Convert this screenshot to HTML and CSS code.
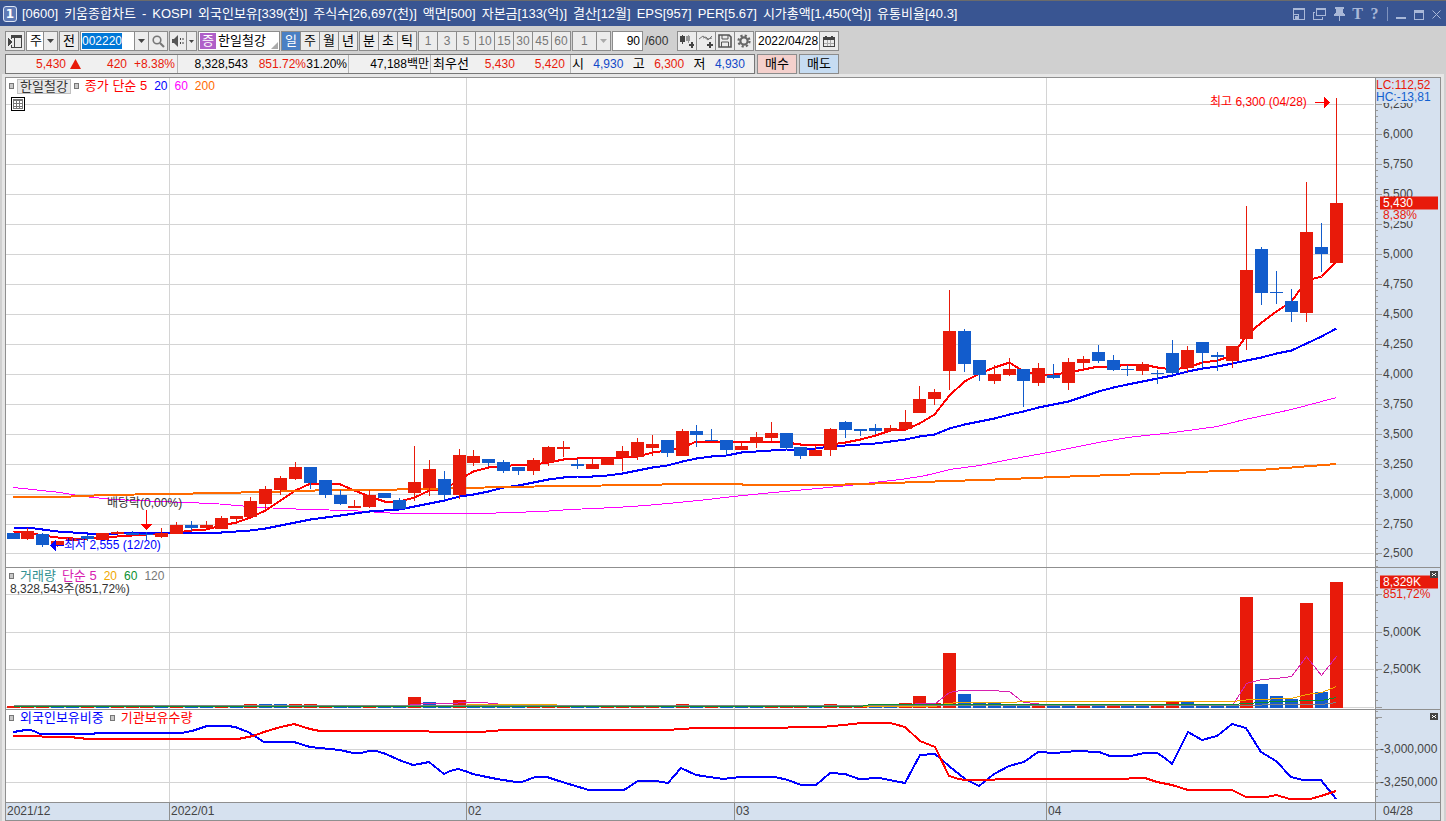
FILE: index.html
```html
<!DOCTYPE html>
<html lang="ko">
<head>
<meta charset="utf-8">
<title>[0600] 키움종합차트</title>
<link rel="stylesheet" href="styles.css">
</head>
<body>
<div class="window">
  <header class="titlebar">
    <span class="badge">1</span>
    <h1 class="title">
      <span>[0600]</span><span>키움종합차트</span><span>-</span><span>KOSPI</span><span>외국인보유[339(천)]</span><span>주식수[26,697(천)]</span><span>액면[500]</span><span>자본금[133(억)]</span><span>결산[12월]</span><span>EPS[957]</span><span>PER[5.67]</span><span>시가총액[1,450(억)]</span><span>유통비율[40.3]</span>
    </h1>
    <div class="winbtns">
      <button type="button" aria-label="축소"><svg width="12" height="12" viewBox="0 0 12 12" shape-rendering="crispEdges"><path d="M0 0h12v12H0zM1 2v4h5v5h5V2z" fill-rule="evenodd"/><path d="M1 7h4v4H1z" fill="#395592"/><path d="M2 8h3v3H2z"/></svg></button>
      <button type="button" aria-label="복제"><svg width="13" height="12" viewBox="0 0 13 12" shape-rendering="crispEdges"><path d="M3 0h10v8H3zM4 2v5h8V2zM0 4h2v1H1v6h8V9h1v3H0z" fill-rule="evenodd"/></svg></button>
      <button type="button" aria-label="고정"><svg width="11" height="14" viewBox="0 0 11 14" shape-rendering="crispEdges"><path d="M1 0h9v2H9v4h1v1h1v2H0V7h1V6h1V2H1zM5 9h1v5H5z"/></svg></button>
      <button type="button" aria-label="글꼴" class="serif">T</button>
      <button type="button" aria-label="도움말" class="serif">?</button>
      <i class="vbar"></i>
      <button type="button" aria-label="최소화"><svg width="10" height="12" viewBox="0 0 10 12" shape-rendering="crispEdges"><path d="M0 9h10v2H0z"/></svg></button>
      <button type="button" aria-label="최대화"><svg width="10" height="12" viewBox="0 0 10 12" shape-rendering="crispEdges"><path d="M0 2h10v10H0zM1 5v6h8V5z" fill-rule="evenodd"/></svg></button>
      <button type="button" aria-label="닫기"><svg width="9" height="12" viewBox="0 0 9 12"><path d="M.5 2.500l8 8M8.500 2.500l-8 8" fill="none" stroke="#a9b8d8"/></svg></button>
    </div>
  </header>

  <div class="tools">
    <div class="toolbar">
      <button type="button" class="box sq" aria-label="메뉴"><svg width="14" height="13" viewBox="0 0 14 13" shape-rendering="crispEdges"><path d="M3 0h11v13H3v-3h1v2h9V3H4v1H3z"/><path d="M6 1h1v11H6z"/><path d="M0 3l5 4-5 4z"/></svg></button>
      <label class="box drop w32"><select class="ko" aria-label="구분"><option>주</option></select><span class="arr"><svg width="7" height="4"><path d="M0 0h7L3.500 4z"/></svg></span></label>
      <button type="button" class="box sq ko">전</button>
      <div class="box code">
        <input id="code" type="text" value="002220" aria-label="종목코드">
        <button type="button" class="seg14" aria-label="목록"><svg width="7" height="4"><path d="M0 0h7L3.500 4z"/></svg></button>
        <button type="button" class="seg19" aria-label="검색"><svg width="13" height="13" viewBox="0 0 13 13"><circle cx="5" cy="5" r="3.800" fill="none" stroke="#777" stroke-width="1.600"/><path d="M8 8l4 4" stroke="#777" stroke-width="2.200"/></svg></button>
      </div>
      <div class="box pair">
        <button type="button" class="seg16" aria-label="소리"><svg width="13" height="12" viewBox="0 0 13 12"><path d="M0 4h2l4-4v12L2 8H0z" fill="#555"/><path d="M8 3h1v2H8zM8 7h1v2H8zM10.500 3h1v2h-1zM10.500 7h1v2h-1z"/></svg></button>
        <button type="button" class="seg10" aria-label="소리 설정"><svg width="5" height="3"><path d="M0 0h5L2.500 3z"/></svg></button>
      </div>
      <div class="box name ko"><span class="tag">증</span><span>한일철강</span><svg class="corner" width="7" height="7"><path d="M7 0v7H0z"/></svg></div>
      <div class="box group ko">
        <button type="button" class="on">일</button><button type="button">주</button><button type="button">월</button><button type="button">년</button>
      </div>
      <div class="box group ko">
        <button type="button">분</button><button type="button">초</button><button type="button">틱</button>
      </div>
      <div class="box group dim">
        <button type="button">1</button><button type="button">3</button><button type="button">5</button><button type="button">10</button><button type="button">15</button><button type="button">30</button><button type="button">45</button><button type="button">60</button>
      </div>
      <label class="box drop w39 dim"><select aria-label="간격"><option>1</option></select><span class="arr"><svg width="7" height="4"><path d="M0 0h7L3.500 4z"/></svg></span></label>
      <input class="box count" type="text" value="90" aria-label="봉 개수">
      <span class="total">/600</span>
      <div class="box group icons">
        <button type="button" aria-label="캔들 추가"><svg width="16" height="15" viewBox="0 0 16 15" shape-rendering="crispEdges"><path d="M1 2h5v6H1zM3 1h1v9H3z"/><path d="M7 2h4v5H7zM9 1h1v8H9z" fill="#999"/><path d="M10 10h5v2h-5zM12 8h2v6h-2z"/></svg></button>
        <button type="button" aria-label="지표 추가"><svg width="16" height="15" viewBox="0 0 16 15"><path d="M1 5l4-3 5 4 4-4M5 4l3-1 2 2 4-1" fill="none" stroke="#777"/><path d="M9 10h6v2H9zM11 8h2v6h-2z"/></svg></button>
        <button type="button" aria-label="저장"><svg width="14" height="14" viewBox="0 0 14 14"><path d="M1 1h10l2 2v10H1z" fill="none" stroke="#555" stroke-width="1.600"/><path d="M4 1v4h6V1M3.500 13V8h7v5" fill="none" stroke="#555"/></svg></button>
        <button type="button" aria-label="설정"><svg width="14" height="14" viewBox="0 0 14 14"><circle cx="7" cy="7" r="3.600" fill="none" stroke="#666" stroke-width="2.200"/><circle cx="7" cy="7" r="5.500" fill="none" stroke="#666" stroke-width="2.200" stroke-dasharray="2.200 2.120"/></svg></button>
      </div>
      <div class="box date">
        <input type="text" value="2022/04/28" aria-label="날짜">
        <button type="button" class="seg19" aria-label="달력"><svg width="12" height="11" viewBox="0 0 12 11" shape-rendering="crispEdges"><path d="M0 1h12v10H0zM1 4v6h10V4z" fill-rule="evenodd"/><path d="M2 0h2v1H2zM8 0h2v1H8z"/><path d="M4 4h1v6H4zM7 4h1v6H7zM1 7h10v1H1z" fill="#aaa"/></svg></button>
      </div>
    </div>

    <div class="quotes">
      <div class="box quote">
        <div class="cell c1"><b class="up w60">5,430</b><svg class="tri" width="11" height="10"><path d="M5.500 0L11 10H0z"/></svg><b class="up w46">420</b><b class="up w48">+8.38%</b></div>
        <div class="cell c2"><b class="w70">8,328,543</b><b class="up w58">851.72%</b><b class="w41">31.20%</b></div>
        <div class="cell c3"><b>47,188백만</b></div>
        <div class="cell c4"><span class="ko">최우선</span><b class="up w46">5,430</b><b class="up w50">5,420</b></div>
        <div class="cell c5"><span class="ko">시</span><b class="down">4,930</b><span class="ko">고</span><b class="up">6,300</b><span class="ko">저</span><b class="down">4,930</b></div>
      </div>
      <button type="button" class="box trade buy ko">매수</button>
      <button type="button" class="box trade sell ko">매도</button>
    </div>
  </div>

  <main class="chart">
    <section class="pane" id="price">
      <div class="plot">
        <svg class="draw" viewBox="6 78 1369 489" preserveAspectRatio="none"></svg>
        <div class="legend ko">
          <i class="mark"></i><span class="chip">한일철강</span><i class="mark"></i>
          <span class="l-red">종가 단순 5</span><span class="num l-blue">20</span><span class="num l-mag">60</span><span class="num l-org">200</span>
        </div>
        <button type="button" class="gridbtn" aria-label="표"><svg width="10" height="10" viewBox="0 0 10 10" shape-rendering="crispEdges"><path d="M0 0h10v10H0zM1 2v2h2V2zM4 2v2h2V2zM7 2v2h2V2zM1 5v2h2V5zM4 5v2h2V5zM7 5v2h2V5zM1 8v1h2V8zM4 8v1h2V8zM7 8v1h2V8z" fill-rule="evenodd" fill="#777"/></svg></button>
      </div>
      <div class="axis"><svg class="ticks" viewBox="1376 78 64 489" preserveAspectRatio="none"></svg></div>
    </section>
    <section class="pane" id="volume">
      <div class="plot">
        <svg class="draw" viewBox="6 568 1369 141" preserveAspectRatio="none"></svg>
        <div class="legend ko">
          <i class="mark"></i><span class="l-teal">거래량</span><span class="l-pink">단순 5</span><span class="num l-yel">20</span><span class="num l-grn">60</span><span class="num l-gray">120</span>
        </div>
        <p class="note">8,328,543주(851,72%)</p>
      </div>
      <div class="axis"><svg class="ticks" viewBox="1376 568 64 141" preserveAspectRatio="none"></svg><button type="button" class="close" aria-label="닫기"><svg width="6" height="5" viewBox="0 0 6 5" shape-rendering="crispEdges"><path d="M1 1h1v1H1zM4 1h1v1H4zM2 2h2v1H2zM1 3h1v1H1zM4 3h1v1H4z"/></svg></button></div>
    </section>
    <section class="pane" id="holding">
      <div class="plot">
        <svg class="draw" viewBox="6 710 1369 92" preserveAspectRatio="none"></svg>
        <div class="legend ko">
          <i class="mark"></i><span class="l-blue">외국인보유비중</span><i class="mark"></i><span class="l-red">기관보유수량</span>
        </div>
      </div>
      <div class="axis"><svg class="ticks" viewBox="1376 710 64 92" preserveAspectRatio="none"></svg><button type="button" class="close" aria-label="닫기"><svg width="6" height="5" viewBox="0 0 6 5" shape-rendering="crispEdges"><path d="M1 1h1v1H1zM4 1h1v1H4zM2 2h2v1H2zM1 3h1v1H1zM4 3h1v1H4z"/></svg></button></div>
    </section>
    <footer class="dates">
      <div class="months"><span>2021/12</span><span>2022/01</span><span>02</span><span>03</span><span>04</span></div>
      <div class="last">04/28</div>
    </footer>
  </main>
</div>
<script src="chart.js"></script>
</body>
</html>
```
FILE: styles.css
```css
* { box-sizing: border-box; }
html, body { height: 100%; margin: 0; }
body, button, input, select {
  font-family: "Liberation Sans", "Noto Sans CJK KR", sans-serif;
  font-size: 12px;
  line-height: 16px;
  color: #000;
}
.ko, .ko button { font-size: 13px; }
button, input, select { margin: 0; padding: 0; border: 0; background: none; border-radius: 0; outline: 0; }
button { display: flex; align-items: center; justify-content: center; white-space: nowrap; }
svg { display: block; fill: #444; }
b { font-weight: 400; }

.window {
  display: flex;
  flex-direction: column;
  min-height: 100vh;
  background: #d0d0d0;
  border-top: 1px solid #6b6b6b;
}

/* title bar */
.titlebar {
  display: flex;
  align-items: center;
  height: 25px;
  padding: 0 5px 0 3px;
  background: #395592;
  color: #fff;
}
.badge {
  width: 14px;
  height: 16px;
  border: 1px solid #dfe6f4;
  border-radius: 3px;
  background: #5f7ab5;
  font: bold 12px/14px "DejaVu Sans", sans-serif;
  text-align: center;
}
.title {
  display: flex;
  flex: 1;
  gap: 6px;
  margin: 0 0 0 5px;
  font-size: 13px;
  font-weight: 400;
  white-space: nowrap;
}
.winbtns { display: flex; align-items: center; gap: 8px; }
.winbtns button { height: 16px; color: #a9b8d8; }
.winbtns svg { fill: #a9b8d8; }
.winbtns .serif { width: 9px; font: bold 16px/16px "Liberation Serif", serif; }
.vbar { width: 1px; height: 14px; background: #7f93be; }

/* tool rows */
.tools { display: flex; flex-direction: column; gap: 3px; padding: 5px 5px 2px; }
.toolbar { display: flex; gap: 1px; }
.quotes { display: flex; gap: 2px; }
.box { flex: none; height: 20px; border: 1px solid #8c8c8c; background: #ececec; }
.sq { width: 20px; }
.drop { position: relative; display: flex; }
.drop select { width: 100%; padding-left: 3px; appearance: none; background: #fff; }
.w32 { width: 32px; }
.w39 { width: 39px; }
.drop .arr {
  position: absolute;
  top: 0;
  right: 0;
  display: flex;
  align-items: center;
  justify-content: center;
  width: 14px;
  height: 18px;
  border-left: 1px solid #8c8c8c;
  background: #ececec;
  pointer-events: none;
}
.drop.dim select { padding-left: 8px; background: #ececec; color: #777; }
.drop.dim .arr svg { fill: #aaa; }
.code, .pair, .date, .group { display: flex; }
.code input { width: 53px; padding-left: 1px; background: #fff; }
.code input::selection { background: #0078d7; color: #fff; }
.code button, .pair button + button, .date button, .group button + button { border-left: 1px solid #8c8c8c; }
.seg10 { width: 10px; }
.seg14 { width: 14px; }
.seg16 { width: 16px; }
.seg19 { width: 19px; }
.name { position: relative; display: flex; gap: 1px; width: 82px; background: #fff; line-height: 18px; }
.tag { width: 16px; margin: 1px; height: 16px; line-height: 16px; background: #b060c8; color: #fff; text-align: center; }
.corner { position: absolute; right: 1px; bottom: 1px; fill: #aaa; }
.group button { width: 19px; }
.group button:first-child { width: 18px; }
.group .on { background: #4a80c4; color: #fff; }
.group.dim button { color: #777; }
.count { width: 31px; padding-right: 2px; background: #fff; text-align: right; }
.total { width: 32px; padding-left: 1px; line-height: 20px; color: #333; }
.date input { width: 63px; padding-left: 2px; background: #fff; }

.quote { display: flex; width: 750px; background: #f0f0f0; border-color: #777; }
.cell { display: flex; line-height: 18px; text-align: right; white-space: nowrap; }
.cell + .cell { border-left: 1px solid #b4b4b4; }
.up { color: #e81a0a; }
.down { color: #1048c8; }
.w41 { width: 41px; }
.w46 { width: 46px; }
.w48 { width: 48px; }
.w50 { width: 50px; }
.w58 { width: 58px; }
.w60 { width: 60px; }
.w70 { width: 70px; }
.tri { margin: 4px 0 0 4px; fill: #e81a0a; }
.c1 { width: 171px; }
.c2 { width: 171px; }
.c3 { width: 82px; justify-content: flex-end; padding-right: 1px; }
.c4 { width: 140px; padding-left: 2px; }
.c5 { flex: 1; justify-content: space-between; padding: 0 9px 0 1px; }
.trade { width: 40px; }
.buy { background: #f4d0cc; }
.sell { background: #c6dcf2; }

/* chart */
.chart {
  display: grid;
  flex: 1;
  grid-template-rows: 490fr 142fr 93fr 17fr;
  border: 1px solid #8f8f8f;
  margin: 1px 5px 0;
  outline: 3px solid #e6e6e6;
  background: #fff;
}
.pane, .dates { display: grid; grid-template-columns: 1fr 65px; min-height: 0; }
.pane { border-bottom: 1px solid #8f8f8f; }
.plot, .axis { position: relative; min-width: 0; min-height: 0; }
.axis { border-left: 1px solid #8f8f8f; background: #d6e1ef; }
.draw, .ticks { position: absolute; inset: 0; width: 100%; height: 100%; shape-rendering: crispEdges; }
.legend { position: absolute; top: 0; left: 3px; display: flex; align-items: center; gap: 6px; height: 16px; white-space: nowrap; }
.legend .num { font-size: 12px; margin-left: 1px; }
.mark { width: 5px; height: 6px; border: 1px solid #777; background: #c8c8c8; }
.chip { padding: 0 2px; margin: 0 -3px; border: 1px solid #c0c0c0; background: #e8e8e8; line-height: 13px; color: #333; }
.gridbtn { position: absolute; top: 19px; left: 5px; width: 14px; height: 14px; border: 1px solid #000; background: #fff; }
.note { position: absolute; top: 13px; left: 4px; margin: 0; color: #333; }
.l-red { color: #f00; }
.l-blue { color: #00f; }
.l-mag { color: #f0f; }
.l-org { color: #ff6a00; }
.l-teal { color: #309090; }
.l-pink { color: #d820b0; }
.l-yel { color: #f0a800; }
.l-grn { color: #0a9030; }
.l-gray { color: #777; }
.ann { position: absolute; white-space: nowrap; transform: translateY(-50%); }
.ann.dark { color: #333; }
.scale { position: absolute; left: 7px; transform: translateY(-50%); color: #444; line-height: 13px; }
.scale.corner-label { left: 0; width: 60px; background: #d6e1ef; line-height: 12px; }
.scale.pct { width: 56px; background: #d6e1ef; line-height: 12px; }
.scale.wide { left: 4px; }
.scale.now { left: 4px; width: 58px; padding-left: 3px; background: #e81a0a; color: #fff; }
.scale.up { color: #e81a0a; }
.scale.down { color: #1060d0; }
.close { position: absolute; z-index: 1; top: 3px; right: 2px; width: 8px; height: 7px; background: #444; }
.close svg { fill: #fff; }
.dates { background: #d6e1ef; color: #444; line-height: 16px; }
.months { display: grid; grid-template-columns: 163fr 297fr 268fr 312fr 329fr; }
.months span { padding-left: 1px; }
.months span + span { border-left: 1px solid #8f8f8f; }
.last { padding-left: 7px; border-left: 1px solid #8f8f8f; }
```
FILE: chart.js
```js
const NS = 'http://www.w3.org/2000/svg';
const RED = '#e81a0a', BLUE = '#125ccc', GRID = '#d4d4d4';
const X0 = 13, STEP = 1323 / 89;
const cx = i => Math.round(X0 + STEP * i - 0.4);

function add(svg, tag, attrs) {
  const el = document.createElementNS(NS, tag);
  for (const k in attrs) el.setAttribute(k, attrs[k]);
  svg.appendChild(el);
}
const rect = (svg, x, y, w, h, fill) => add(svg, 'rect', { x, y, width: w, height: h, fill });
function line(svg, pts, stroke, width) {
  const shift = width % 2 ? 0.5 : 0;
  add(svg, 'polyline', {
    points: pts.map(p => (p[0] + shift) + ',' + (p[1] + shift)).join(' '),
    fill: 'none', stroke, 'stroke-width': width, 'vector-effect': 'non-scaling-stroke'
  });
}
const byIndex = ys => ys.map((y, i) => [cx(i) + 0.5, y + 0.5]);

// kind, body top, body bottom, wick top, wick bottom
const candles = [
  ['b',533,539,533,539],['r',531,539,528,540],['b',534,545,533,547],['r',541,545,541,547],['r',538,541,538,541],
  ['b',536,539,535,541],['r',533,540,533,541],['r',532,534,531,534],['b',533,535,531,535],['b',534,535,532,540],
  ['r',533,537,528,538],['r',525,534,522,534],['b',525,528,521,531],['r',525,528,521,528],['r',518,529,516,529],
  ['r',516,519,516,522],['r',501,517,497,517],['r',489,504,486,510],['r',478,490,476,495],['r',467,479,462,480],
  ['b',467,483,467,489],['b',480,495,480,498],['b',495,504,490,505],['r',506,508,500,508],['r',495,507,490,508],
  ['b',493,498,493,498],['b',500,509,498,509],['r',482,493,446,501],['r',469,488,460,496],['b',479,495,471,500],
  ['r',455,495,449,499],['r',456,463,450,466],['b',459,463,459,466],['b',462,471,460,473],['b',467,471,467,475],
  ['r',460,471,458,475],['r',447,462,446,466],['r',447,449,441,457],['b',464,466,459,469],['r',464,469,458,469],
  ['r',458,465,458,465],['r',451,457,446,471],['r',442,457,438,460],['r',444,448,435,456],['b',440,453,440,457],
  ['r',431,456,429,456],['b',431,435,425,447],['b',440,441,429,441],['b',440,450,440,455],['r',446,450,442,450],
  ['r',437,443,432,448],['r',433,438,422,441],['b',433,448,433,450],['b',447,456,447,459],['r',450,456,446,456],
  ['r',429,450,428,456],['b',422,430,421,438],['b',429,431,429,436],['b',428,431,424,434],['r',428,431,425,432],
  ['r',422,429,410,431],['r',399,413,386,413],['r',392,399,389,405],['r',331,371,290,390],['b',331,364,329,372],
  ['b',360,375,360,381],['r',374,381,365,384],['r',369,375,358,376],['b',369,381,369,407],['r',368,383,363,386],
  ['b',375,378,364,379],['r',362,383,358,390],['r',359,363,356,369],['b',352,361,345,363],['b',360,370,355,371],
  ['b',369,370,365,376],['r',364,371,362,375],['b',373,374,370,384],['b',353,373,340,375],['r',350,368,346,372],
  ['b',342,353,342,368],['b',355,357,352,371],['r',346,361,346,368],['r',270,339,206,350],['b',249,293,247,305],
  ['b',292,293,271,304],['b',301,312,289,322],['r',232,313,182,322],['b',247,254,223,272],['r',203,263,98,263]
];
const ma5 = [531,532,535,537,538,538,537,536,535,534,533,532,530,529,525,522,517,510,500,490,483,483,484,490,496,501,501,497,490,489,479,471,467,466,464,464,462,459,458,457,457,457,456,452,450,447,441,441,441,441,441,441,442,444,444,444,442,439,435,430,429,423,414,395,381,373,367,362,371,374,374,372,369,366,366,364,364,367,369,367,362,360,355,335,322,311,301,280,276,261];
const ma20 = [527,527,529,531,532,533,533,533,532,532,532,532,532,532,532,531,530,528,525,522,519,517,515,513,511,510,509,506,503,500,496,494,491,487,485,482,479,477,476,476,475,473,470,467,465,461,458,456,455,452,451,450,449,449,448,446,445,444,443,441,439,436,434,428,424,421,418,414,411,407,404,401,396,391,387,384,381,378,375,371,368,366,363,360,357,353,350,343,336,328];
const ma60 = [[13,487],[60,492],[83,496],[113,499],[183,502],[213,503],[260,507],[307,509],[350,510],[397,513],[480,513],[511,512],[541,511],[570,509],[615,507],[645,505],[678,502],[707,499],[733,496],[773,492],[817,488],[848,485],[873,482],[900,479],[920,476],[934,473],[949,469],[979,465],[1009,459],[1053,451],[1098,442],[1127,437],[1173,432],[1217,426],[1240,420],[1291,409],[1336,397]];
const ma200 = [[13,497],[60,497],[105,495],[165,494],[222,493],[300,491],[330,490],[375,490],[465,488],[505,487],[565,486],[640,485],[685,484],[740,484],[745,485],[830,485],[890,483],[950,481],[1010,479],[1055,477],[1115,475],[1175,473],[1220,471],[1260,470],[1336,464]];

const months = [169, 466, 734, 1046];
function grid(svg, ys, top, height) {
  ys.forEach(y => rect(svg, 6, y, 1368, 1, GRID));
  months.forEach(x => rect(svg, x, top, 1, height, GRID));
}

// price pane
const price = document.querySelector('#price .draw');
const priceRows = [104,134,164,194,224,254,284,314,344,374,404,434,464,494,524,553];
grid(price, priceRows, 78, 489);
line(price, ma60, '#f0f', 1);
line(price, byIndex(ma5), '#f00', 2);
line(price, byIndex(ma20), '#00f', 2);
line(price, ma200, '#ff6a00', 2);
candles.forEach(([k, t, b, wt, wb], i) => {
  const c = k === 'r' ? RED : BLUE;
  rect(price, cx(i), wt, 1, wb - wt, c);
  rect(price, cx(i) - 6, t, 13, b - t, c);
});
rect(price, 1315, 102, 10, 1, '#f00');
add(price, 'path', { d: 'M1324 96.500l6 6-6 6z', fill: '#f00' });
rect(price, 56, 545, 8, 1, '#00f');
add(price, 'path', { d: 'M56 539.500l-6 6 6 6z', fill: '#00f' });
rect(price, 146, 510, 1, 15, '#f00');
add(price, 'path', { d: 'M141 524h11l-5.500 6z', fill: '#f00' });

// volume pane
const volume = document.querySelector('#volume .draw');
grid(volume, [594, 632, 669, 707], 568, 141);
const kinds = 'rrrbbrbrrrbrbbrbrbbrrrbbrbbrbbrbbbbrrrbbrrrrbrbrbbbrrrbbrrbbbrrbrbbbbrbbrbrbbrrrbbbrrbbbrbr';
const tops = { 16:704, 17:704, 18:704, 19:704, 20:704, 27:697, 28:702, 30:700, 45:704, 46:705, 55:704, 60:703, 61:696, 62:703, 63:653, 64:694, 65:703, 66:703, 78:702, 79:702, 83:597, 84:684, 85:696, 86:699, 87:603, 88:692, 89:582 };
const volKind = { 63:'r', 64:'b', 61:'r', 60:'r', 30:'r', 27:'r', 28:'b', 78:'r', 79:'b', 83:'r', 84:'b', 85:'b', 86:'b', 87:'r', 88:'b', 89:'r', 45:'r', 46:'b', 55:'r' };
candles.forEach((c, i) => {
  const top = tops[i] || 706;
  rect(volume, cx(i) - 6, top, 13, 708 - top, (volKind[i] || kinds[i]) === 'r' ? RED : BLUE);
});
line(volume, [[395,706],[414,704],[428,703],[450,703],[466,702],[480,702],[495,703],[505,705],[900,705],[919,703],[935,703],[949,692],[960,690],[987,690],[1009,691],[1023,702],[1035,703],[1050,705],[1232,705],[1246,683],[1261,679],[1276,678],[1291,676],[1306,656],[1321,675],[1336,656]], '#d820b0', 1);
line(volume, [[466,704],[555,704],[560,706],[935,706],[945,703],[960,702],[1015,702],[1018,701],[1232,701],[1250,699],[1291,698],[1306,694],[1321,692],[1336,686]], '#f0a800', 1);
line(volume, [[13,705],[1232,705],[1291,704],[1321,704],[1336,702]], '#808080', 1);
line(volume, [[13,706],[860,706],[870,704],[1232,704],[1246,703],[1276,701],[1321,700],[1336,697]], '#0a9030', 1);

// holdings pane
const holding = document.querySelector('#holding .draw');
grid(holding, [749, 782], 710, 92);
line(holding, [[13,732],[20,731],[25,730],[31,730],[36,732],[40,734],[93,734],[96,733],[181,733],[192,731],[207,726],[228,726],[235,727],[248,732],[256,737],[264,742],[294,742],[310,747],[340,750],[353,753],[361,753],[369,751],[376,751],[386,754],[399,760],[413,765],[419,764],[429,762],[444,774],[450,771],[458,769],[465,771],[473,774],[482,776],[497,779],[516,782],[522,782],[535,777],[547,777],[559,781],[589,790],[624,790],[638,781],[656,781],[668,783],[681,768],[696,775],[723,779],[741,777],[775,777],[788,780],[801,785],[816,785],[830,773],[845,774],[859,779],[879,778],[905,783],[920,755],[935,754],[949,766],[965,779],[979,786],[994,774],[1009,766],[1024,762],[1038,752],[1055,753],[1076,751],[1099,752],[1110,756],[1131,756],[1144,753],[1157,753],[1165,758],[1172,764],[1188,732],[1202,740],[1217,736],[1232,724],[1246,728],[1261,752],[1276,761],[1291,777],[1303,780],[1321,780],[1336,799]], '#00f', 2);
line(holding, [[13,736],[40,736],[44,737],[70,737],[88,739],[238,739],[253,736],[264,732],[277,728],[294,724],[310,729],[320,731],[427,731],[431,732],[480,732],[504,730],[666,730],[697,728],[755,728],[822,727],[843,725],[862,723],[890,723],[905,727],[920,741],[935,747],[949,776],[959,779],[965,780],[993,780],[997,779],[1113,779],[1145,778],[1157,782],[1172,785],[1188,790],[1232,790],[1246,797],[1267,797],[1276,795],[1290,799],[1310,799],[1321,796],[1336,791]], '#f00', 2);

// value scales
function ticks(id, majors, from, to, step) {
  const svg = document.querySelector(id + ' .ticks');
  majors.forEach(y => rect(svg, 1376, y, 6, 1, '#999'));
  for (let y = from; y <= to; y += step) rect(svg, 1376, Math.round(y), 2, 1, '#999');
}
ticks('#price', priceRows, 80, 566, 6);
ticks('#volume', [594, 632, 669, 707], 572, 707, 7.5);
ticks('#holding', [717, 749, 782], 711, 801, 6.5);

function place(id, part, cls, text, top, height, y, x) {
  const el = document.createElement('span');
  el.className = cls;
  el.textContent = text;
  el.style.top = (y - top) / height * 100 + '%';
  if (x !== undefined) el.style.left = (x - 6) / 1369 * 100 + '%';
  document.querySelector(id + ' ' + part).appendChild(el);
}
const label = (cls, text, y) => place('#price', '.axis', 'scale ' + cls, text, 78, 489, y);
priceRows.forEach((y, i) => label('', (6250 - i * 250).toLocaleString('en-US'), y));
label('corner-label up', 'LC:112,52', 85);
label('corner-label down', 'HC:-13,81', 97);
label('pct up', '8,38%', 215);
label('now', '5,430', 203);
const vol = (cls, text, y) => place('#volume', '.axis', 'scale ' + cls, text, 568, 141, y);
vol('pct up', '851,72%', 594);
vol('now', '8,329K', 582);
vol('', '5,000K', 632);
vol('', '2,500K', 669);
place('#holding', '.axis', 'scale wide', '-3,000,000', 710, 92, 749);
place('#holding', '.axis', 'scale wide', '-3,250,000', 710, 92, 782);

place('#price', '.plot', 'ann l-red', '최고 6,300 (04/28)', 78, 489, 102, 1210);
place('#price', '.plot', 'ann l-blue', '최저 2,555 (12/20)', 78, 489, 545, 64);
place('#price', '.plot', 'ann dark', '배당락(0,00%)', 78, 489, 503, 107);

const code = document.getElementById('code');
code.focus();
code.select();
```
